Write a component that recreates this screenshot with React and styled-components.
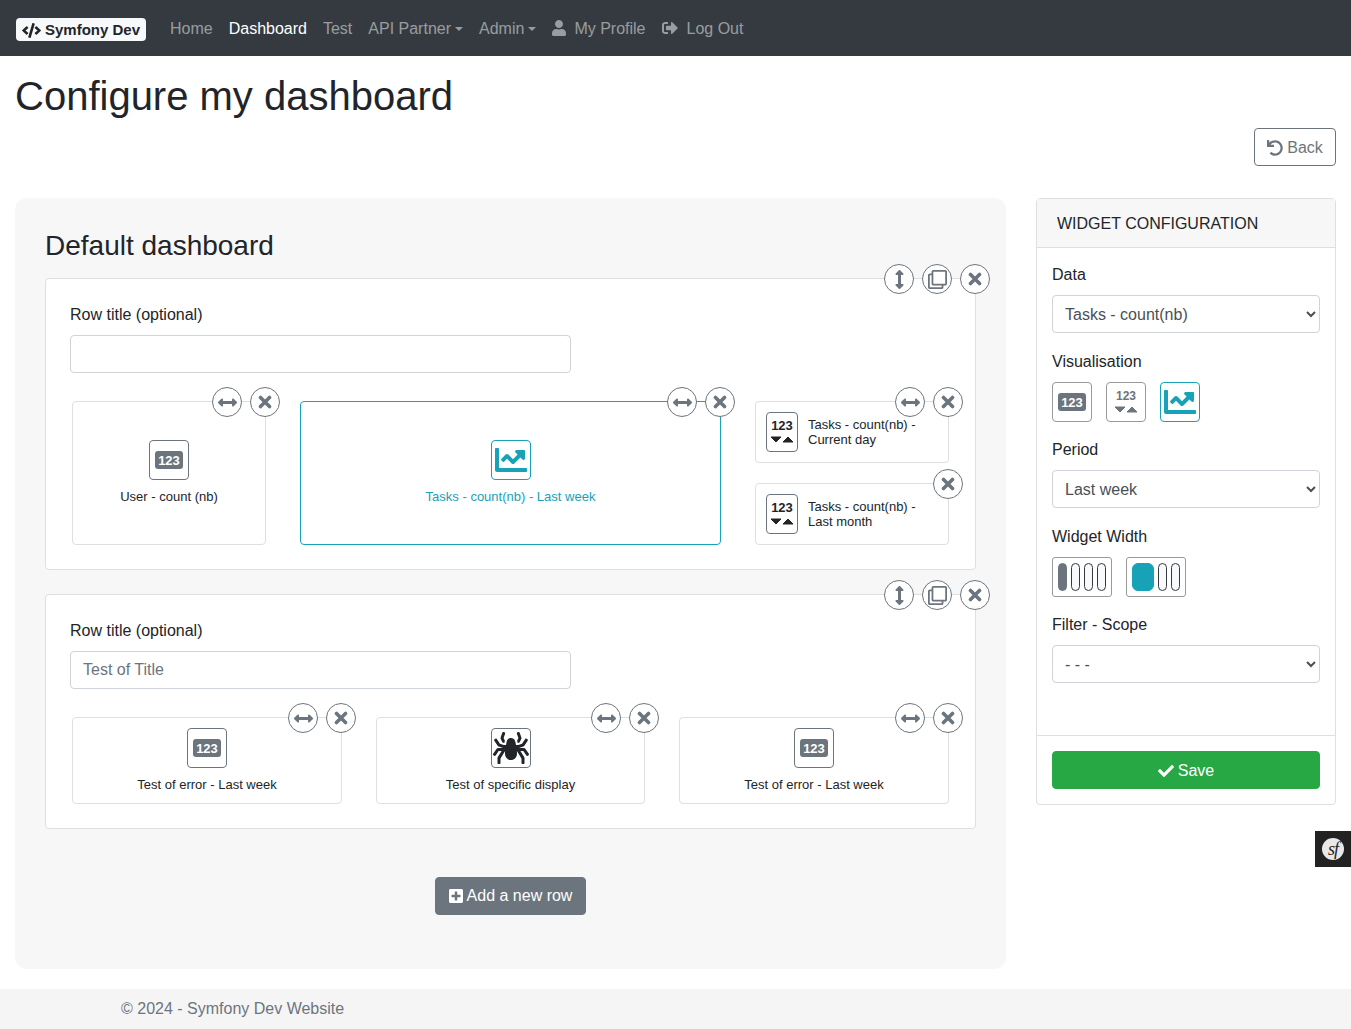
import React from "react";
import styled, { createGlobalStyle } from "styled-components";
import {
  FaCode, FaUser, FaSignOutAlt, FaUndo, FaArrowsAltH, FaArrowsAltV, FaRegClone,
  FaChartLine, FaSpider, FaPlusSquare, FaCheck,
} from "react-icons/fa";

const Global = createGlobalStyle`
  * { box-sizing: border-box; }
  html, body { margin: 0; padding: 0; background: #fff; }
  body { font-family: "Liberation Sans", Arial, sans-serif; font-size: 16px; line-height: 24px; color: #212529; }
`;

const Nav = styled.nav`
  height: 56px; background: #343a40; display: flex; align-items: center; padding: 0 16px;
`;
const Brand = styled.div`
  width: 130px; height: 23px; margin-right: 16px; margin-top: 3px; padding-top: 1px; background: #f8f9fa; border-radius: 4px; color: #212529;
  display: flex; align-items: center; justify-content: center; gap: 4px; font-weight: 700; font-size: 15px; line-height: 22px;
  svg { font-size: 19px; }
`;
const NavLink = styled.a`
  padding: 9px 8px 7px; color: ${(p) => (p.$active ? "#fff" : "rgba(255,255,255,.5)")};
  display: flex; align-items: center; white-space: nowrap;
  svg { margin-left: ${(p) => p.$pull || 0}px; margin-right: ${(p) => p.$gap || 6}px; margin-bottom: 2px; font-size: 16px; }
`;
const Caret = styled.span`
  display: inline-block; margin-left: 4px; border-top: 4.8px solid currentColor;
  border-left: 4.8px solid transparent; border-right: 4.8px solid transparent;
`;

const Page = styled.main`padding: 16px 15px 20px;`;
const Title = styled.h1`margin: 0 0 8px; font-size: 40px; line-height: 48px; font-weight: 500;`;
const Actions = styled.div`display: flex; justify-content: flex-end; margin-bottom: 32px;`;
const BackButton = styled.button`
  height: 38px; width: 82px; background: #fff; border: 1px solid #6c757d; border-radius: 4px; color: #6c757d;
  font: inherit; display: flex; align-items: center; justify-content: center; gap: 4px; padding: 2px 0 0;
  svg { font-size: 16px; }
`;
const Columns = styled.div`display: grid; grid-template-columns: 991px 300px; gap: 30px; align-items: start;`;
const Panel = styled.section`
  background: #f7f7f7; border-radius: 12px; padding: 30px; height: 771px; display: flex; flex-direction: column;
`;
const PanelTitle = styled.h3`margin: 0 0 15px; padding-top: 1px; font-size: 28px; line-height: 34px; font-weight: 500;`;
const RowBox = styled.div`
  position: relative; background: #fff; border: 1px solid #dfdfdf; border-radius: 4px;
  padding: 24px; margin-bottom: 24px;
`;
const Label = styled.label`display: block; margin-bottom: 8px;`;
const TextInput = styled.input`
  display: block; width: 501px; height: 38px; border: 1px solid #ced4da; border-radius: 4px; padding: 6px 12px;
  font: inherit; color: #6c757d; background: #fff; outline: none;
`;
const WidgetGrid = styled.div`
  display: grid; grid-template-columns: ${(p) => p.$cols}; column-gap: 34px; margin: 28px 2px 0;
`;
const Widget = styled.div`
  position: relative; height: ${(p) => p.$h}px; padding-top: 1px; border: 1px solid ${(p) => (p.$active ? "#17a2b8" : "#dfdfdf")};
  border-radius: 4px; background: #fff; display: flex; flex-direction: column; align-items: center; justify-content: center;
  color: ${(p) => (p.$active ? "#17a2b8" : "#212529")}; font-size: 13px; line-height: 20px;
`;
const WidgetIcon = styled.div`margin-bottom: 7px;`;
const Stack = styled.div`display: flex; flex-direction: column; justify-content: space-between; height: 144px;`;
const SmallWidget = styled.div`
  position: relative; height: 62px; border: 1px solid #dfdfdf; border-radius: 4px; background: #fff;
  display: flex; align-items: flex-start; padding: 10px; gap: 10px; font-size: 13px; line-height: 15px;
`;
const SmallText = styled.div`padding-top: 5px;`;
const IconBox = styled.div`
  width: ${(p) => p.$w || 40}px; height: 40px; flex: none; background: #fff; padding-bottom: ${(p) => p.$lift || 0}px;
  border: 1px solid ${(p) => p.$border || "#6c757d"}; border-radius: 4px;
  display: flex; flex-direction: column; align-items: center; justify-content: center;
  color: ${(p) => p.$color || "#212529"};
`;
const Badge = styled.span`
  background: #6c757d; color: #fff; font-weight: 700; font-size: 13px; line-height: 17px; padding: 1px 3px 0; border-radius: 3px;
`;
const Num = styled.span`font-weight: 700; font-size: ${(p) => p.$size || 13}px; line-height: 14px;`;
const Triangles = styled.svg`
  width: 24px; height: 7px; margin-top: 3px; fill: currentColor; stroke: currentColor; stroke-width: 1; stroke-linejoin: round;
`;
const Controls = styled.div`
  position: absolute; top: -15px; right: ${(p) => p.$right}px; display: flex; gap: 8px;
`;
const Circle = styled.span`
  width: 30px; height: 30px; border-radius: 50%; background: #fff; border: 1px solid #6c757d; color: #6c757d;
  display: flex; align-items: center; justify-content: center; font-size: ${(p) => p.$size || 16}px;
`;
const CloseGlyph = styled.svg`
  width: 14px; height: 14px; stroke: currentColor; stroke-width: 3.6; stroke-linecap: round; fill: none;
`;
const AddWrap = styled.div`display: flex; justify-content: center; margin-top: 24px;`;
const AddButton = styled.button`
  width: 151px; height: 38px; background: #6c757d; color: #fff; border: 1px solid #6c757d; border-radius: 4px; font: inherit;
  display: flex; align-items: center; justify-content: center; gap: 3px; padding: 0 1px 0 0;
  svg { font-size: 16px; }
`;

const Card = styled.aside`border: 1px solid #dfdfdf; border-radius: 4px; background: #fff; height: 607px; display: flex; flex-direction: column;`;
const CardHeader = styled.div`
  height: 49px; flex: none; background: #f7f7f7; border-bottom: 1px solid #dfdfdf; padding: 2px 20px 0; display: flex; align-items: center;
`;
const CardBody = styled.div`flex: 1; padding: 15px 15px 0;`;
const Field = styled.div`margin-bottom: ${(p) => p.$mb || 17}px;`;
const FieldLabel = styled.label`display: block; margin-bottom: 8px;`;
const Select = styled.select`
  display: block; width: 100%; height: 38px; border: 1px solid #ced4da; border-radius: 4px; padding: 6px 8px;
  font: inherit; color: #495057; background: #fff;
`;
const IconRow = styled.div`display: flex; gap: 14px;`;
const WidthBox = styled.div`
  width: 60px; height: 40px; border: 1px solid #999; border-radius: 3px; padding: 5px; display: flex; gap: 4px; background: #fff;
`;
const Pill = styled.span`
  display: block; height: 28px; width: ${(p) => (p.$wide ? 22 : 9)}px; border-radius: ${(p) => (p.$wide ? 6 : 5)}px;
  background: ${(p) => p.$fill || "#f8f9fa"}; border: 1px solid ${(p) => p.$fill || "#343a40"};
`;
const CardFooter = styled.div`border-top: 1px solid #dfdfdf; padding: 15px;`;
const SaveButton = styled.button`
  width: 100%; height: 38px; background: #28a745; color: #fff; border: 1px solid #28a745; border-radius: 4px; font: inherit;
  display: flex; align-items: center; justify-content: center; gap: 4px; padding: 2px 0 0;
`;
const Footer = styled.footer`
  height: 40px; background: #f5f5f5; color: #6c757d; padding-left: 121px; display: flex; align-items: center;
`;
const SfToolbar = styled.div`
  position: fixed; right: 0; top: 831px; width: 36px; height: 36px; background: #222; display: flex; align-items: center; justify-content: center;
`;
const SfLogo = styled.span`
  width: 22px; height: 22px; border-radius: 50%; background: #e8e8e8; color: #222; display: flex; align-items: center; justify-content: center;
  font: italic 400 18px/22px "Liberation Serif", serif; letter-spacing: -1px;
`;

const Tri = () => (
  <Triangles viewBox="0 0 24 7">
    <polygon points="1,1 11,1 6,6" />
    <polygon points="13,6 23,6 18,1" />
  </Triangles>
);

const Close = () => (
  <CloseGlyph viewBox="0 0 14 14"><path d="M2.5 2.5 11.5 11.5M11.5 2.5 2.5 11.5" /></CloseGlyph>
);

const Ctl = ({ right, resize, dir = "h", copy }) => (
  <Controls $right={right}>
    {resize && <Circle $size={19}>{dir === "h" ? <FaArrowsAltH /> : <FaArrowsAltV />}</Circle>}
    {copy && <Circle $size={19}><FaRegClone /></Circle>}
    <Circle><Close /></Circle>
  </Controls>
);

const BigWidget = ({ h, active, icon, text }) => (
  <Widget $h={h} $active={active}>
    <Ctl right={-15} resize />
    <WidgetIcon>{icon}</WidgetIcon>
    <div>{text}</div>
  </Widget>
);

const Small = ({ resize, l1, l2 }) => (
  <SmallWidget>
    <Ctl right={-15} resize={resize} />
    <IconBox $w={32} $lift={2}><Num>123</Num><Tri /></IconBox>
    <SmallText>{l1}<br />{l2}</SmallText>
  </SmallWidget>
);

const Count = () => <IconBox><Badge>123</Badge></IconBox>;

export default function App() {
  return (
    <>
      <Global />
      <Nav>
        <Brand><FaCode />Symfony Dev</Brand>
        <NavLink>Home</NavLink>
        <NavLink $active>Dashboard</NavLink>
        <NavLink>Test</NavLink>
        <NavLink>API Partner<Caret /></NavLink>
        <NavLink>Admin<Caret /></NavLink>
        <NavLink $pull={-1} $gap={7}><FaUser />My Profile</NavLink>
        <NavLink $gap={9}><FaSignOutAlt />Log Out</NavLink>
      </Nav>
      <Page>
        <Title>Configure my dashboard</Title>
        <Actions><BackButton><FaUndo />Back</BackButton></Actions>
        <Columns>
          <Panel>
            <PanelTitle>Default dashboard</PanelTitle>
            <RowBox>
              <Ctl right={-15} resize dir="v" copy />
              <Label>Row title (optional)</Label>
              <TextInput defaultValue="" />
              <WidgetGrid $cols="194px 421px 194px">
                <BigWidget h={144} icon={<Count />} text="User - count (nb)" />
                <BigWidget h={144} active text="Tasks - count(nb) - Last week"
                  icon={<IconBox $border="#17a2b8" $color="#17a2b8"><FaChartLine size={32} /></IconBox>} />
                <Stack>
                  <Small resize l1="Tasks - count(nb) -" l2="Current day" />
                  <Small l1="Tasks - count(nb) -" l2="Last month" />
                </Stack>
              </WidgetGrid>
            </RowBox>
            <RowBox>
              <Ctl right={-15} resize dir="v" copy />
              <Label>Row title (optional)</Label>
              <TextInput defaultValue="Test of Title" />
              <WidgetGrid $cols="270px 269px 270px">
                <BigWidget h={87} icon={<Count />} text="Test of error - Last week" />
                <BigWidget h={87} icon={<IconBox><FaSpider size={36} /></IconBox>} text="Test of specific display" />
                <BigWidget h={87} icon={<Count />} text="Test of error - Last week" />
              </WidgetGrid>
            </RowBox>
            <AddWrap><AddButton><FaPlusSquare />Add a new row</AddButton></AddWrap>
          </Panel>
          <Card>
            <CardHeader>WIDGET CONFIGURATION</CardHeader>
            <CardBody>
              <Field>
                <FieldLabel>Data</FieldLabel>
                <Select><option>Tasks - count(nb)</option></Select>
              </Field>
              <Field $mb={16}>
                <FieldLabel>Visualisation</FieldLabel>
                <IconRow>
                  <IconBox $border="#999"><Badge>123</Badge></IconBox>
                  <IconBox $border="#999" $color="#6c757d" $lift={2}><Num $size={12}>123</Num><Tri /></IconBox>
                  <IconBox $border="#17a2b8" $color="#17a2b8"><FaChartLine size={32} /></IconBox>
                </IconRow>
              </Field>
              <Field>
                <FieldLabel>Period</FieldLabel>
                <Select><option>Last week</option></Select>
              </Field>
              <Field $mb={16}>
                <FieldLabel>Widget Width</FieldLabel>
                <IconRow>
                  <WidthBox><Pill $fill="#6c757d" /><Pill /><Pill /><Pill /></WidthBox>
                  <WidthBox><Pill $wide $fill="#17a2b8" /><Pill /><Pill /></WidthBox>
                </IconRow>
              </Field>
              <Field>
                <FieldLabel>Filter - Scope</FieldLabel>
                <Select><option>- - -</option></Select>
              </Field>
            </CardBody>
            <CardFooter><SaveButton><FaCheck />Save</SaveButton></CardFooter>
          </Card>
        </Columns>
      </Page>
      <Footer>© 2024 - Symfony Dev Website</Footer>
      <SfToolbar><SfLogo>sf</SfLogo></SfToolbar>
    </>
  );
}
